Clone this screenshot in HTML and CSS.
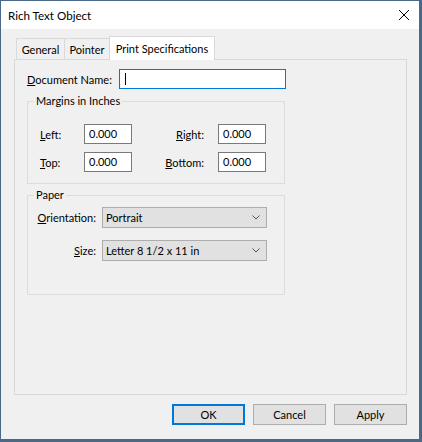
FILE: index.html
```html
<!DOCTYPE html>
<html>
<head>
<meta charset="utf-8">
<title>Rich Text Object</title>
<link rel="stylesheet" href="styles.css">
</head>
<body>
<div class="window">
  <div class="titlebar">
    <span class="title">Rich Text Object</span>
    <svg class="close" width="10" height="10" viewBox="0 0 10 10"><path d="M0 0L10 10M10 0L0 10" stroke="#000" stroke-width="1" fill="none"/></svg>
  </div>
  <div class="client">
    <div class="tabs">
      <div class="tab tab-general">General</div>
      <div class="tab tab-pointer">Pointer</div>
      <div class="tab tab-active">Print Specifications</div>
    </div>
    <div class="page">
      <div class="docrow">
        <span class="doclabel"><u>D</u>ocument Name:</span>
        <div class="textbox focused"><span class="caret"></span></div>
      </div>
      <fieldset class="group margins">
        <legend>Margins in Inches</legend>
        <div class="mgrid">
          <span class="lbl"><u>L</u>eft:</span>
          <div class="num">0.000</div>
          <span class="lbl rlbl"><u>R</u>ight:</span>
          <div class="num">0.000</div>
          <span class="lbl"><u>T</u>op:</span>
          <div class="num">0.000</div>
          <span class="lbl rlbl"><u>B</u>ottom:</span>
          <div class="num">0.000</div>
        </div>
      </fieldset>
      <fieldset class="group paper">
        <legend>Paper</legend>
        <div class="pgrid">
          <span class="plbl"><u>O</u>rientation:</span>
          <div class="combo"><span>Portrait</span><svg width="8" height="5" viewBox="0 0 8 5"><polyline points="0.5,0.5 4,4 7.5,0.5" fill="none" stroke="#555" stroke-width="1"/></svg></div>
          <span class="plbl"><u>S</u>ize:</span>
          <div class="combo"><span>Letter 8 1/2 x 11 in</span><svg width="8" height="5" viewBox="0 0 8 5"><polyline points="0.5,0.5 4,4 7.5,0.5" fill="none" stroke="#555" stroke-width="1"/></svg></div>
        </div>
      </fieldset>
    </div>
    <div class="buttons">
      <div class="btn btn-default">OK</div>
      <div class="btn">Cancel</div>
      <div class="btn">Apply</div>
    </div>
  </div>
</div>
</body>
</html>
```
FILE: styles.css
```css
* { box-sizing: border-box; }
html, body { margin: 0; padding: 0; }
body {
  background: #4a6888;
  font-family: Lato, "Noto Sans", sans-serif;
  font-size: 11px;
  color: #000;
  height: 442px;
  overflow: hidden;
  white-space: nowrap;
}
.window {
  width: 418px;
  height: 438px;
  margin: 1px 0 0 1px;
  background: #f0f0f0;
  display: flex;
  flex-direction: column;
}
.titlebar {
  height: 28px;
  background: #fff;
  display: flex;
  align-items: center;
  justify-content: space-between;
  padding: 0 10px 0 7px;
}
.title { font-size: 11.6px; }
.close { display: block; }
.client {
  flex: 1;
  display: flex;
  flex-direction: column;
  padding: 7px 12px 14px 13px;
}
.tabs {
  display: flex;
  align-items: flex-end;
  padding-left: 2px;
  height: 23px;
}
.tab {
  height: 21px;
  border: 1px solid #d9d9d9;
  border-bottom: none;
  display: flex;
  align-items: center;
  justify-content: center;
}
.tab-general { width: 49px; }
.tab-pointer { width: 45px; border-left: none; }
.tab-active {
  width: 106px;
  height: 24px;
  margin-left: -1px;
  margin-bottom: -1px;
  background: #fff;
  position: relative;
  z-index: 1;
}
.page {
  flex: 1;
  border: 1px solid #d9d9d9;
  padding: 9px 12px 0 12px;
}
.docrow {
  display: flex;
  align-items: center;
}
.doclabel { width: 92px; }
.textbox {
  width: 167px;
  height: 20px;
  background: #fff;
  border: 1px solid #7a7a7a;
  display: flex;
  align-items: center;
  padding-left: 5px;
}
.textbox.focused { border-color: #0078d7; }
.caret {
  width: 1px;
  height: 12px;
  background: #000;
}
.group {
  margin: 4px 0 0 0;
  padding: 0;
  width: 258px;
  min-width: 0;
  border: 1px solid #dcdcdc;
}
.group legend {
  margin-left: 6px;
  padding: 0 2px;
  line-height: 16px;
}
.paper { margin-top: 3px; }
.mgrid {
  display: grid;
  grid-template-columns: 44px 48px 1fr 48px;
  row-gap: 8px;
  align-items: center;
  padding: 15px 18px 11px 12px;
}
.rlbl {
  text-align: right;
  padding-right: 14px;
}
.num {
  height: 20px;
  background: #fff;
  border: 1px solid #7a7a7a;
  padding-left: 4px;
  line-height: 18px;
}
.pgrid {
  display: grid;
  grid-template-columns: 74px 165px;
  row-gap: 12px;
  align-items: center;
  padding: 4px 0 33px 0;
}
.plbl {
  text-align: right;
  padding-right: 6px;
}
.combo {
  height: 21px;
  background: #e1e1e1;
  border: 1px solid #adadad;
  display: flex;
  align-items: center;
  justify-content: space-between;
  padding: 0 6px 0 3px;
}
.combo svg { display: block; }
.buttons {
  display: flex;
  justify-content: flex-end;
  gap: 8px;
  margin-top: 9px;
}
.btn {
  width: 73px;
  height: 21px;
  background: #e1e1e1;
  border: 1px solid #adadad;
  display: flex;
  align-items: center;
  justify-content: center;
}
.btn-default { border: 2px solid #0078d7; }
```
